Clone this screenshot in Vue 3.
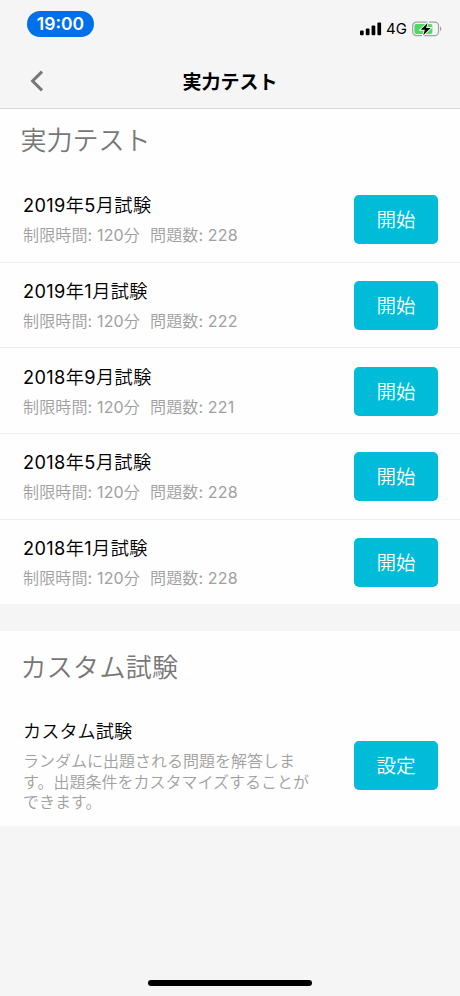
<script setup>
const tests = [
  { year: 2019, month: 5, count: 228 },
  { year: 2019, month: 1, count: 222 },
  { year: 2018, month: 9, count: 221 },
  { year: 2018, month: 5, count: 228 },
  { year: 2018, month: 1, count: 228 },
]
</script>

<template>
  <div class="screen">
    <header class="top">
      <div class="status">
        <span class="clock">19:00</span>
        <div class="indicators">
          <svg class="signal" width="22" height="14" viewBox="0 0 22 14">
            <rect x="0" y="8.6" width="3.7" height="4.6" rx="1" />
            <rect x="5.8" y="6.4" width="3.7" height="6.8" rx="1" />
            <rect x="11.6" y="3.6" width="3.7" height="9.6" rx="1" />
            <rect x="17.4" y="0.4" width="3.7" height="12.8" rx="1" />
          </svg>
          <span class="network">4G</span>
          <svg class="battery" width="30" height="16" viewBox="0 0 30 16">
            <rect x="0.7" y="1.2" width="25.8" height="13.4" rx="3.6" fill="none" stroke="#a3a3a3" stroke-width="1.2" />
            <path d="M28 5.6c1.9.8 1.9 3.8 0 4.6z" fill="#a3a3a3" />
            <rect x="2.4" y="2.9" width="18" height="10" rx="2" fill="#4cd964" />
            <path d="M15.6 2 8.8 8.7h4.1l-1.7 5.5 7.4-7.1h-4.5z" fill="#000" stroke="#f5f5f5" stroke-width="2" paint-order="stroke" />
          </svg>
        </div>
      </div>
      <nav class="nav">
        <svg class="back" width="14" height="22" viewBox="0 0 14 22">
          <path d="M12 1.6 2.6 11 12 20.4" fill="none" stroke="#777" stroke-width="3" />
        </svg>
        <h1>実力テスト</h1>
      </nav>
    </header>

    <section class="panel">
      <h2>実力テスト</h2>
      <div v-for="test in tests" :key="`${test.year}-${test.month}`" class="row">
        <div class="info">
          <div class="name dated"><b>{{ test.year }}</b>年<b>{{ test.month }}</b>月試験</div>
          <div class="meta">
            <span>制限時間<b>: 120</b>分</span>
            <span>問題数<b>: {{ test.count }}</b></span>
          </div>
        </div>
        <button>開始</button>
      </div>
    </section>

    <section class="panel custom">
      <h2>カスタム試験</h2>
      <div class="row">
        <div class="info">
          <div class="name">カスタム試験</div>
          <p>ランダムに出題される問題を解答します。出題条件をカスタマイズすることができます。</p>
        </div>
        <button>設定</button>
      </div>
    </section>

    <footer><div class="home"></div></footer>
  </div>
</template>

<style>
body { margin: 0; background: #f5f5f5; }
</style>

<style scoped>
.screen {
  display: flex;
  flex-direction: column;
  width: 460px;
  height: 996px;
  overflow: hidden;
  background: #f5f5f5;
  color: #000;
  font-family: Inter, "Noto Sans CJK JP", sans-serif;
}
h1, h2, p { margin: 0; font-weight: 400; }
b { font-weight: 400; }
.top {
  box-sizing: border-box;
  height: 109px;
  flex: none;
  border-bottom: 1px solid #d9d9d9;
}
.status {
  display: flex;
  justify-content: space-between;
  height: 54px;
  padding: 11px 18px 0 27px;
  box-sizing: border-box;
}
.clock {
  width: 67px;
  height: 26px;
  border-radius: 13px;
  background: #0070ea;
  color: #fff;
  font-size: 17.5px;
  font-weight: 600;
  line-height: 26px;
  text-align: center;
}
.indicators { display: flex; align-items: center; height: 35px; }
.network { margin: 1px 5px 0 4px; font-size: 15px; line-height: 18px; }
.battery { display: block; }
.nav {
  display: grid;
  grid-template-columns: 60px 1fr 60px;
  align-items: center;
  height: 54px;
}
.back { margin-left: 30px; }
h1 {
  padding: 3px 0 0;
  font-size: 19px;
  font-weight: 700;
  line-height: 28px;
  text-align: center;
}
.panel { flex: none; background: #fefefe; }
h2 {
  box-sizing: border-box;
  height: 68px;
  padding: 12px 0 0 20.5px;
  color: #777;
  font-size: 26px;
  font-weight: 350;
  line-height: 40px;
}
.row {
  display: flex;
  box-sizing: border-box;
  align-items: center;
  justify-content: space-between;
  height: 85.7px;
  padding: 1px 22px 0 23px;
  border-bottom: 1px solid #eee;
}
.row:last-child { height: 84.7px; border-bottom: 0; }
.name { font-size: 18.2px; font-weight: 350; line-height: 28px; }
.dated { letter-spacing: 0.38px; }
.meta {
  display: flex;
  gap: 10px;
  margin-top: 3px;
  color: #a0a0a0;
  font-size: 16px;
  font-weight: 350;
  letter-spacing: 0.15px;
  line-height: 26px;
}
button {
  width: 84px;
  height: 49px;
  padding: 2px 0 0;
  border: 0;
  border-radius: 5px;
  background: #00bcd8;
  color: #fff;
  font-family: inherit;
  font-size: 19.5px;
  font-weight: 350;
  line-height: 47px;
}
.custom { margin-top: 26.3px; }
.custom h2 { height: 75px; padding-top: 17px; letter-spacing: 0.3px; }
.custom .row { height: 120px; padding: 0 22px 1px 23px; }
.info p {
  width: 294px;
  margin-top: 6px;
  color: #a0a0a0;
  font-size: 16px;
  font-weight: 350;
  line-height: 20.5px;
}
footer {
  display: flex;
  flex: 1;
  align-items: flex-end;
  justify-content: center;
  padding-bottom: 10px;
}
.home { width: 164px; height: 6px; border-radius: 3px; background: #000; }
</style>
